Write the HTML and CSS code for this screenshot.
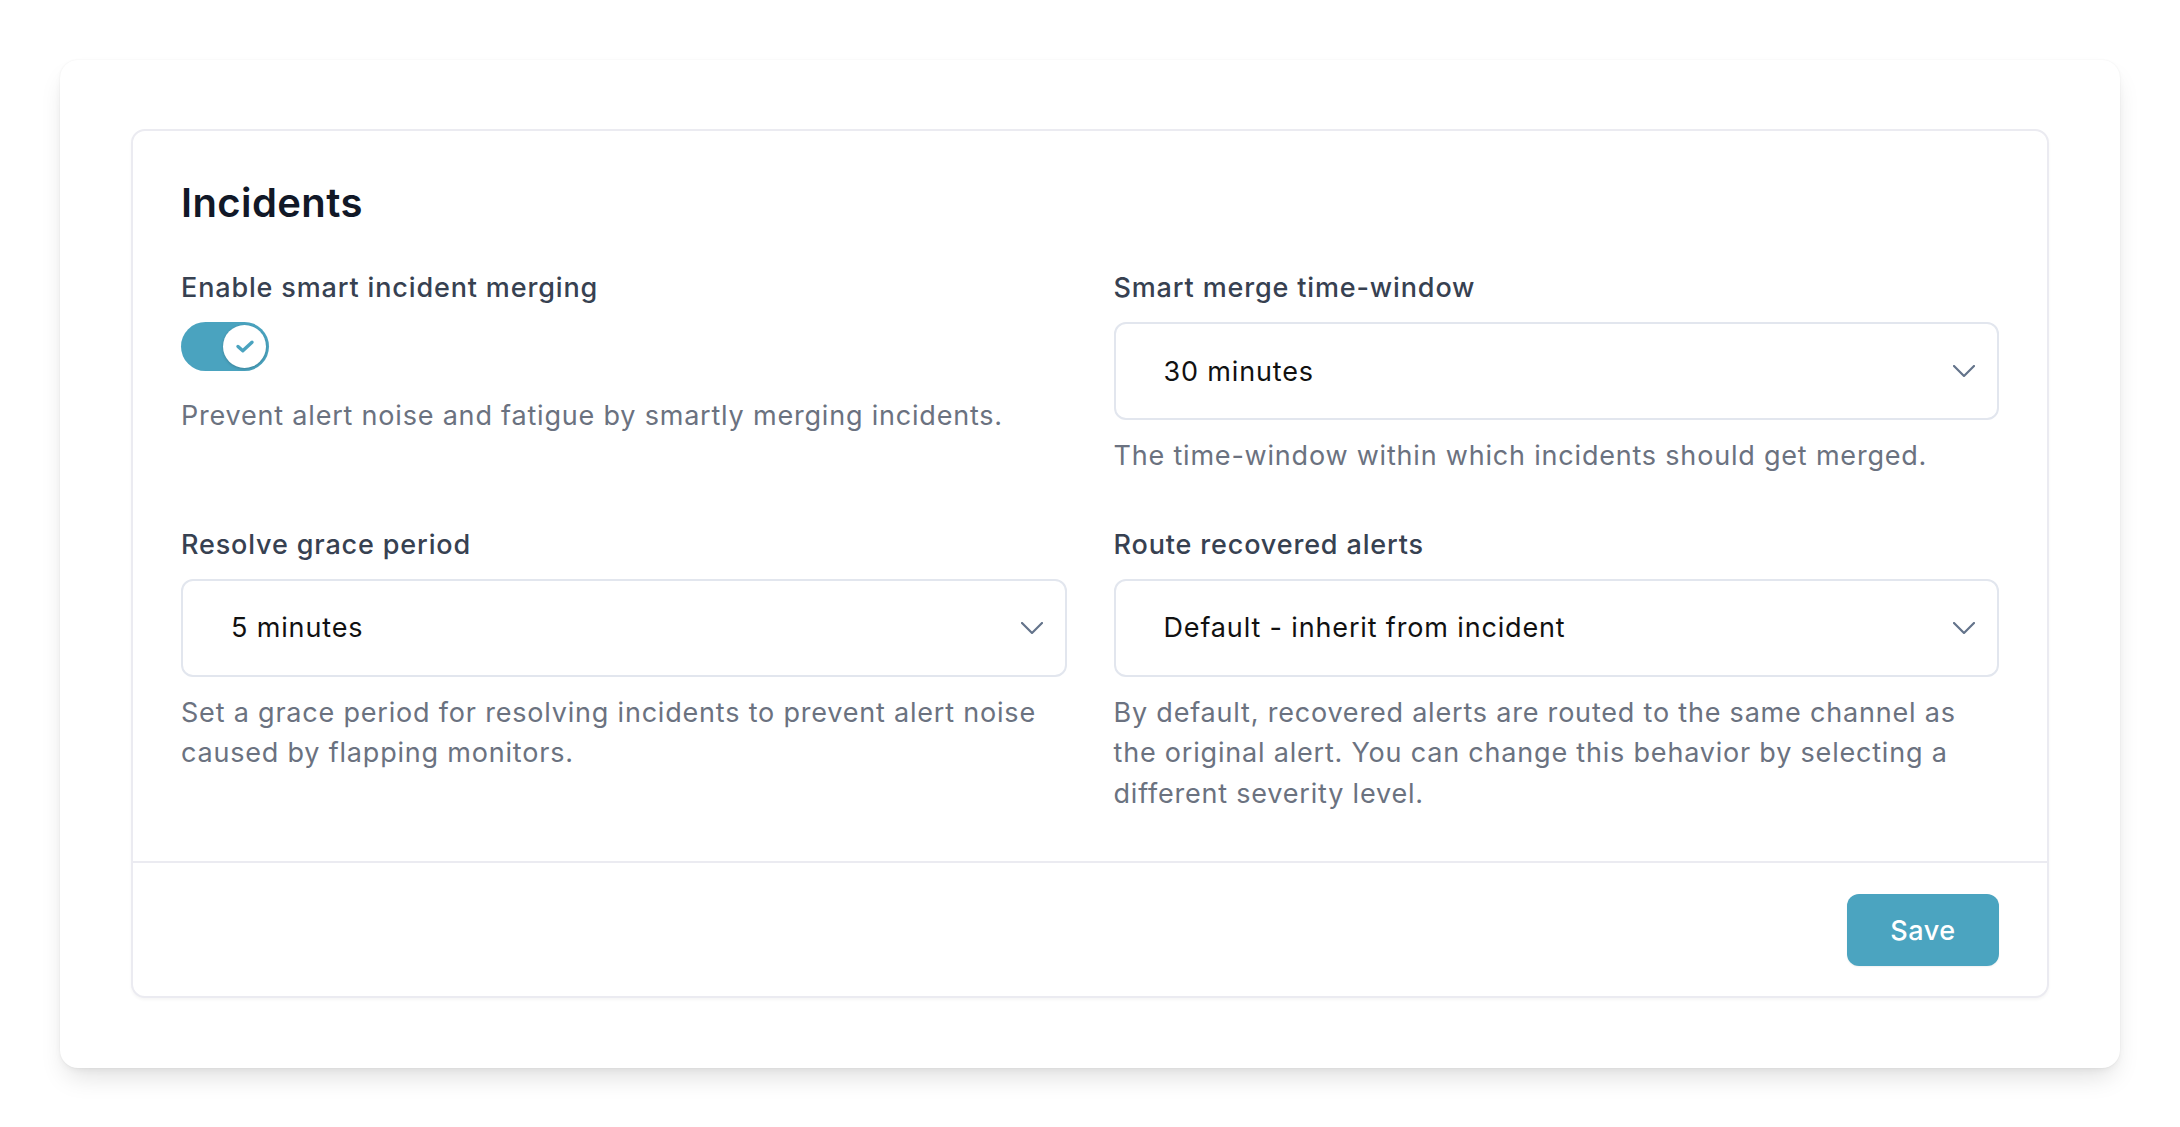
FILE: index.html
```html
<!DOCTYPE html>
<html lang="en">
<head>
<meta charset="utf-8">
<title>Incidents settings</title>
<link rel="stylesheet" href="styles.css">
</head>
<body>
<div class="page">
  <div class="outer-card">
    <section class="panel">
      <div class="panel-body">
        <h2 class="title">Incidents</h2>
        <div class="grid">
          <div class="field">
            <div class="label">Enable smart incident merging</div>
            <div class="toggle">
              <span class="knob">
                <svg width="20" height="15" viewBox="0 0 20 15"><path d="M3 7.5 L7.8 11.8 L17 3.2" fill="none" stroke="#4aa3bf" stroke-width="3.4" stroke-linecap="round" stroke-linejoin="round"/></svg>
              </span>
            </div>
            <p class="desc desc-toggle">Prevent alert noise and fatigue by smartly merging incidents.</p>
          </div>
          <div class="field">
            <div class="label">Smart merge time-window</div>
            <div class="select">
              <span class="select-value">30 minutes</span>
              <svg class="chevron" width="22" height="12" viewBox="0 0 22 12"><path d="M1 1 L11 11 L21 1" fill="none" stroke="#64748b" stroke-width="2.2" stroke-linecap="round" stroke-linejoin="round"/></svg>
            </div>
            <p class="desc">The time-window within which incidents should get merged.</p>
          </div>
          <div class="field">
            <div class="label">Resolve grace period</div>
            <div class="select">
              <span class="select-value">5 minutes</span>
              <svg class="chevron" width="22" height="12" viewBox="0 0 22 12"><path d="M1 1 L11 11 L21 1" fill="none" stroke="#64748b" stroke-width="2.2" stroke-linecap="round" stroke-linejoin="round"/></svg>
            </div>
            <p class="desc">Set a grace period for resolving incidents to prevent alert noise caused by flapping monitors.</p>
          </div>
          <div class="field">
            <div class="label">Route recovered alerts</div>
            <div class="select">
              <span class="select-value">Default - inherit from incident</span>
              <svg class="chevron" width="22" height="12" viewBox="0 0 22 12"><path d="M1 1 L11 11 L21 1" fill="none" stroke="#64748b" stroke-width="2.2" stroke-linecap="round" stroke-linejoin="round"/></svg>
            </div>
            <p class="desc">By default, recovered alerts are routed to the same channel as the original alert. You can change this behavior by selecting a different severity level.</p>
          </div>
        </div>
      </div>
      <div class="panel-footer">
        <button class="save">Save</button>
      </div>
    </section>
  </div>
</div>
</body>
</html>
```

FILE: styles.css
```css
* { box-sizing: border-box; }

html, body {
  margin: 0;
  padding: 0;
  background: #ffffff;
}

body {
  font-family: Inter, Roboto, "Liberation Sans", sans-serif;
  color: #374151;
}

.page {
  padding: 60px 60px 59px 60px;
}

.outer-card {
  background: #ffffff;
  border-radius: 18px;
  padding: 69px 71px 70px 71px;
  box-shadow: 0 14px 26px -6px rgba(0, 0, 0, 0.13), 0 3px 8px -3px rgba(0, 0, 0, 0.08), 0 0 2px rgba(0, 0, 0, 0.06);
}

.panel {
  border: 2px solid #ebebf1;
  border-radius: 14px;
  background: #fff;
  box-shadow: 0 2px 3px rgba(0, 0, 0, 0.04);
}

.panel-body {
  padding: 48px 48px 47px 48px;
}

.title {
  margin: 0;
  font-size: 40px;
  line-height: 48px;
  font-weight: 600;
  letter-spacing: 0.4px;
  color: #111827;
}

.grid {
  margin-top: 41px;
  display: grid;
  grid-template-columns: 1fr 1fr;
  column-gap: 47px;
  row-gap: 48px;
}

.field {
  display: flex;
  flex-direction: column;
  align-items: flex-start;
}

.label {
  font-size: 27px;
  line-height: 40px;
  font-weight: 500;
  letter-spacing: 0.85px;
  color: #374151;
}

.toggle {
  margin-top: 14px;
  width: 88px;
  height: 49px;
  border-radius: 25px;
  background: #4aa3bf;
  display: flex;
  align-items: center;
  justify-content: flex-end;
  padding-right: 3px;
}

.knob {
  width: 43px;
  height: 43px;
  border-radius: 50%;
  background: #fff;
  display: flex;
  align-items: center;
  justify-content: center;
  box-shadow: 0 1px 3px rgba(0, 0, 0, 0.2);
}

.select {
  margin-top: 14px;
  width: 100%;
  height: 98px;
  border: 2px solid #e2e6ee;
  border-radius: 12px;
  display: flex;
  align-items: center;
  justify-content: space-between;
  padding: 0 22px 0 48px;
}

.select-value {
  font-size: 27px;
  letter-spacing: 0.85px;
  color: #111111;
}

.chevron {
  display: block;
}

.desc {
  margin: 16px 0 0 0;
  font-size: 27px;
  line-height: 40.5px;
  letter-spacing: 0.8px;
  color: #6b7280;
}

.desc-toggle {
  margin-top: 25px;
}

.panel-footer {
  border-top: 2px solid #ebebf1;
  padding: 31px 48px 30px 48px;
  display: flex;
  justify-content: flex-end;
}

.save {
  width: 152px;
  height: 72px;
  border: none;
  border-radius: 12px;
  background: #4ba4c0;
  color: #fff;
  font-family: Inter, Roboto, "Liberation Sans", sans-serif;
  font-size: 27px;
  font-weight: 500;
  letter-spacing: 0.6px;
  box-shadow: 0 1px 2px rgba(0, 0, 0, 0.06);
}
```
